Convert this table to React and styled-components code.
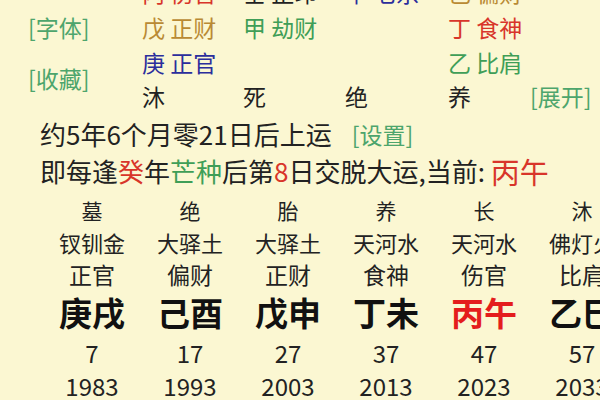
import React from "react";
import styled, { createGlobalStyle } from "styled-components";

const Global = createGlobalStyle`
  html, body { margin: 0; padding: 0; background: #fbf7d2; }
  body { font-family: "Noto Sans CJK SC", "Noto Sans", sans-serif; }
`;

const Page = styled.div`
  width: 600px;
  height: 400px;
  overflow: hidden;
  background: #fbf7d2;
  color: #222;
`;

const Content = styled.div`
  margin-top: -26px;
`;

const PillarGrid = styled.div`
  display: grid;
  grid-template-columns: 142px 101px 102px 103px 82px auto;
  grid-template-rows: 35px 35px 35px 33px;
  font-size: 23px;
`;

const Cell = styled.div`
  grid-column: ${(p) => p.$col};
  grid-row: ${(p) => p.$row};
  display: flex;
  align-items: center;
  white-space: nowrap;
  color: ${(p) => p.$color || "#222"};
`;

const LinkCell = styled(Cell)`
  padding-left: ${(p) => p.$pad || 0}px;
  color: #4da56c;
  font-size: 23px;
`;

const Line = styled.div`
  height: 37px;
  display: flex;
  align-items: center;
  padding-left: 40px;
  font-size: 26px;
  white-space: nowrap;
  color: #222;
  margin-top: ${(p) => p.$mt || 0}px;
`;

const Span = styled.span`
  color: ${(p) => p.$color || "inherit"};
  font-size: ${(p) => p.$size || "inherit"};
`;

const SmallLink = styled.span`
  color: #4da56c;
  font-size: 23px;
  margin-left: 20px;
`;

const Dayun = styled.div`
  display: grid;
  grid-template-columns: repeat(6, 98px);
  margin-left: 43px;
  margin-top: 5px;
`;

const DCell = styled.div`
  height: ${(p) => p.$h}px;
  display: flex;
  align-items: center;
  justify-content: center;
  white-space: nowrap;
  font-size: ${(p) => p.$size}px;
  font-weight: ${(p) => (p.$bold ? 700 : 400)};
  color: ${(p) => p.$color || "#222"};
`;

const red = "#d8352a";
const blue = "#2b2e9c";
const brown = "#b98a34";
const green = "#3f9e57";

const pillars = [
  [
    ["丙 伤官", red],
    ["戊 正财", brown],
    ["庚 正官", blue],
    ["沐", "#222"],
  ],
  [
    ["壬 正印", "#222"],
    ["甲 劫财", green],
    null,
    ["死", "#222"],
  ],
  [["辛 七杀", blue], null, null, ["绝", "#222"]],
  [
    ["己 偏财", brown],
    ["丁 食神", red],
    ["乙 比肩", green],
    ["养", "#222"],
  ],
];

const dayun = [
  ["墓", "钗钏金", "正官", "庚戌", "7", "1983"],
  ["绝", "大驿土", "偏财", "己酉", "17", "1993"],
  ["胎", "大驿土", "正财", "戊申", "27", "2003"],
  ["养", "天河水", "食神", "丁未", "37", "2013"],
  ["长", "天河水", "伤官", "丙午", "47", "2023", true],
  ["沐", "佛灯火", "比肩", "乙巳", "57", "2033"],
];

const rowSpecs = [
  { h: 32, size: 21 },
  { h: 32, size: 22 },
  { h: 32, size: 23 },
  { h: 44, size: 33, bold: true },
  { h: 36, size: 24 },
  { h: 30, size: 24 },
];

export default function App() {
  return (
    <>
      <Global />
      <Page>
        <Content>
          <PillarGrid>
            <LinkCell $col={1} $row={2} $pad={28}>[字体]</LinkCell>
            <LinkCell $col={1} $row="3 / 5" $pad={28}>[收藏]</LinkCell>
            {pillars.map((col, ci) =>
              col.map((item, ri) =>
                item ? (
                  <Cell key={ci + "-" + ri} $col={ci + 2} $row={ri + 1} $color={item[1]}>
                    {item[0]}
                  </Cell>
                ) : null
              )
            )}
            <LinkCell $col={6} $row={4} $pad={0}>[展开]</LinkCell>
          </PillarGrid>
          <Line $mt={3}>
            约5年6个月零21日后上运<SmallLink>[设置]</SmallLink>
          </Line>
          <Line>
            即每逢<Span $color={red}>癸</Span>年<Span $color={green}>芒种</Span>后第
            <Span $color={red}>8</Span>日交脱大运,当前:&nbsp;
            <Span $color={red} $size="29px">丙午</Span>
          </Line>
          <Dayun>
            {rowSpecs.map((spec, ri) =>
              dayun.map((col, ci) => (
                <DCell
                  key={ri + "-" + ci}
                  $h={spec.h}
                  $size={spec.size}
                  $bold={spec.bold}
                  $color={ri === 3 && col[6] ? "#e41d1d" : ri === 3 ? "#111" : "#222"}
                >
                  {col[ri]}
                </DCell>
              ))
            )}
          </Dayun>
        </Content>
      </Page>
    </>
  );
}
